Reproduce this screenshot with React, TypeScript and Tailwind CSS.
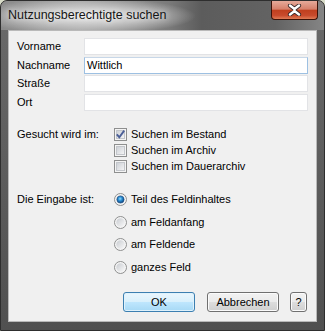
import React from "react";

const font = { fontFamily: '"Liberation Sans", Arial, sans-serif' };

function CheckBox({ checked }: { checked?: boolean }) {
  return (
    <svg width="13" height="13" viewBox="0 0 13 13" className="shrink-0">
      <defs>
        <linearGradient id="cbIn" x1="0" y1="0" x2="1" y2="1">
          <stop offset="0" stopColor="#cbcfd5" />
          <stop offset="1" stopColor="#f6f6f6" />
        </linearGradient>
      </defs>
      <rect x="0.5" y="0.5" width="12" height="12" fill="#f4f4f4" stroke="#8e8f8f" />
      <rect x="2.5" y="2.5" width="8" height="8" fill="url(#cbIn)" stroke="#c3c6cb" />
      {checked && (
        <path d="M2.8 6.4 L5.3 9.2 L10.2 2.6" fill="none" stroke="#4b5f97" strokeWidth="1.9" />
      )}
    </svg>
  );
}

function Radio({ checked }: { checked?: boolean }) {
  return (
    <svg width="13" height="13" viewBox="0 0 13 13" className="shrink-0">
      <defs>
        <linearGradient id="rdIn" x1="0" y1="0" x2="1" y2="1">
          <stop offset="0" stopColor="#c9ccd1" />
          <stop offset="1" stopColor="#f8f8f8" />
        </linearGradient>
        <radialGradient id="rdOn" cx="0.45" cy="0.4" r="0.6">
          <stop offset="0" stopColor="#9adcfb" />
          <stop offset="0.45" stopColor="#2a8fd4" />
          <stop offset="1" stopColor="#0f3f78" />
        </radialGradient>
      </defs>
      <circle cx="6.5" cy="6.5" r="6" fill="#f4f4f4" stroke="#8e8f8f" />
      <circle cx="6.5" cy="6.5" r="4.2" fill="url(#rdIn)" />
      {checked && <circle cx="6.5" cy="6.5" r="3.6" fill="url(#rdOn)" stroke="#1b4f86" strokeWidth="0.6" />}
    </svg>
  );
}

const fields = [
  { label: "Vorname", value: "" },
  { label: "Nachname", value: "Wittlich", focused: true },
  { label: "Straße", value: "" },
  { label: "Ort", value: "" },
];

const places = [
  { label: "Suchen im Bestand", checked: true },
  { label: "Suchen im Archiv" },
  { label: "Suchen im Dauerarchiv" },
];

const modes = [
  { label: "Teil des Feldinhaltes", checked: true },
  { label: "am Feldanfang" },
  { label: "am Feldende" },
  { label: "ganzes Feld" },
];

export default function App() {
  return (
    <div className="w-[325px] h-[331px] bg-[#d8dcc8]" style={font}>
      <div className="w-full h-full flex flex-col rounded-t-[7px] border border-[#2e2e2e] bg-[linear-gradient(to_bottom,#6a6a6a,#505050)]">
        {/* title bar */}
        <div className="h-[29px] shrink-0 flex items-start justify-between rounded-t-[6px] bg-[radial-gradient(ellipse_110px_18px_at_85px_15px,#e9e9e9_0%,#c8c8c8_45%,transparent_100%),linear-gradient(to_right,#8a8a8a_0%,#a2a2a2_25%,#7a7a7a_52%,#5c5c5c_62%,#636363_85%,#858585_100%)]">
          <span className="pl-[7px] pt-[7px] text-[12.5px] leading-[15px] text-[#151515] [text-shadow:0_0_6px_#fff]">
            Nutzungsberechtigte suchen
          </span>
          <div className="mr-[6px] w-[47px] h-[19px] rounded-b-[4px] border border-t-0 border-[#3b1208] flex items-center justify-center bg-[linear-gradient(to_bottom,#e6aa9a_0%,#d6806b_45%,#c0401f_52%,#c84a2c_80%,#e07b55_100%)]">
            <svg width="15" height="12" viewBox="0 0 15 12">
              <path
                d="M3 1.5 L7.5 5 L12 1.5 M3 10.5 L7.5 7 L12 10.5"
                fill="none"
                stroke="#3a2a2a"
                strokeWidth="4.2"
                strokeLinecap="round"
              />
              <path
                d="M3 1.5 L7.5 5 L12 1.5 M3 10.5 L7.5 7 L12 10.5 M7.5 5 L7.5 7"
                fill="none"
                stroke="#ffffff"
                strokeWidth="2.4"
                strokeLinecap="round"
              />
            </svg>
          </div>
        </div>

        {/* client area */}
        <div className="flex-1 mx-[7px] mb-[8px] border border-[#b9b9b9] bg-[#f0f0f0] flex flex-col pt-[7px] pl-[8px] pr-[9px] pb-[9px] text-[11px] text-black">
          <div className="grid grid-cols-[67px_224px] gap-y-[1.5px]">
            {fields.map((f) => (
              <React.Fragment key={f.label}>
                <div className="h-[17px] flex items-center">{f.label}</div>
                <div
                  className={
                    "h-[17px] bg-white flex items-center pl-[2px] border " +
                    (f.focused ? "border-[#9dc0e2] border-t-[#c7d7e8]" : "border-[#e2e3e6]")
                  }
                >
                  {f.value}
                </div>
              </React.Fragment>
            ))}
          </div>

          <div className="mt-[16px] grid grid-cols-[97px_auto]">
            <div className="h-[16px] flex items-center">Gesucht wird im:</div>
            <div className="flex flex-col">
              {places.map((p) => (
                <div key={p.label} className="h-[16px] flex items-center gap-[4px]">
                  <CheckBox checked={p.checked} />
                  <span>{p.label}</span>
                </div>
              ))}
            </div>
          </div>

          <div className="mt-[13.5px] grid grid-cols-[97px_auto]">
            <div className="h-[22.7px] flex items-center">Die Eingabe ist:</div>
            <div className="flex flex-col">
              {modes.map((m) => (
                <div key={m.label} className="h-[22.7px] flex items-center gap-[4px]">
                  <Radio checked={m.checked} />
                  <span>{m.label}</span>
                </div>
              ))}
            </div>
          </div>

          <div className="mt-auto flex justify-end items-center">
            <button className="w-[72px] h-[20px] rounded-[3px] border border-[#3c7fb1] bg-[linear-gradient(to_bottom,#eaf6fd_0%,#d9f0fc_48%,#bee6fd_52%,#a7d9f5_100%)] shadow-[inset_0_0_0_1px_#dff2fc] text-[11px]">
              OK
            </button>
            <button className="ml-[12px] w-[72px] h-[20px] rounded-[3px] border border-[#707070] bg-[linear-gradient(to_bottom,#f2f2f2_0%,#ebebeb_48%,#dddddd_52%,#cfcfcf_100%)] shadow-[inset_0_0_0_1px_#fbfbfb] text-[11px]">
              Abbrechen
            </button>
            <button className="ml-[11px] w-[17px] h-[20px] rounded-[3px] border border-[#707070] bg-[linear-gradient(to_bottom,#f2f2f2_0%,#ebebeb_48%,#dddddd_52%,#cfcfcf_100%)] shadow-[inset_0_0_0_1px_#fbfbfb] text-[11px]">
              ?
            </button>
          </div>
        </div>
      </div>
    </div>
  );
}
